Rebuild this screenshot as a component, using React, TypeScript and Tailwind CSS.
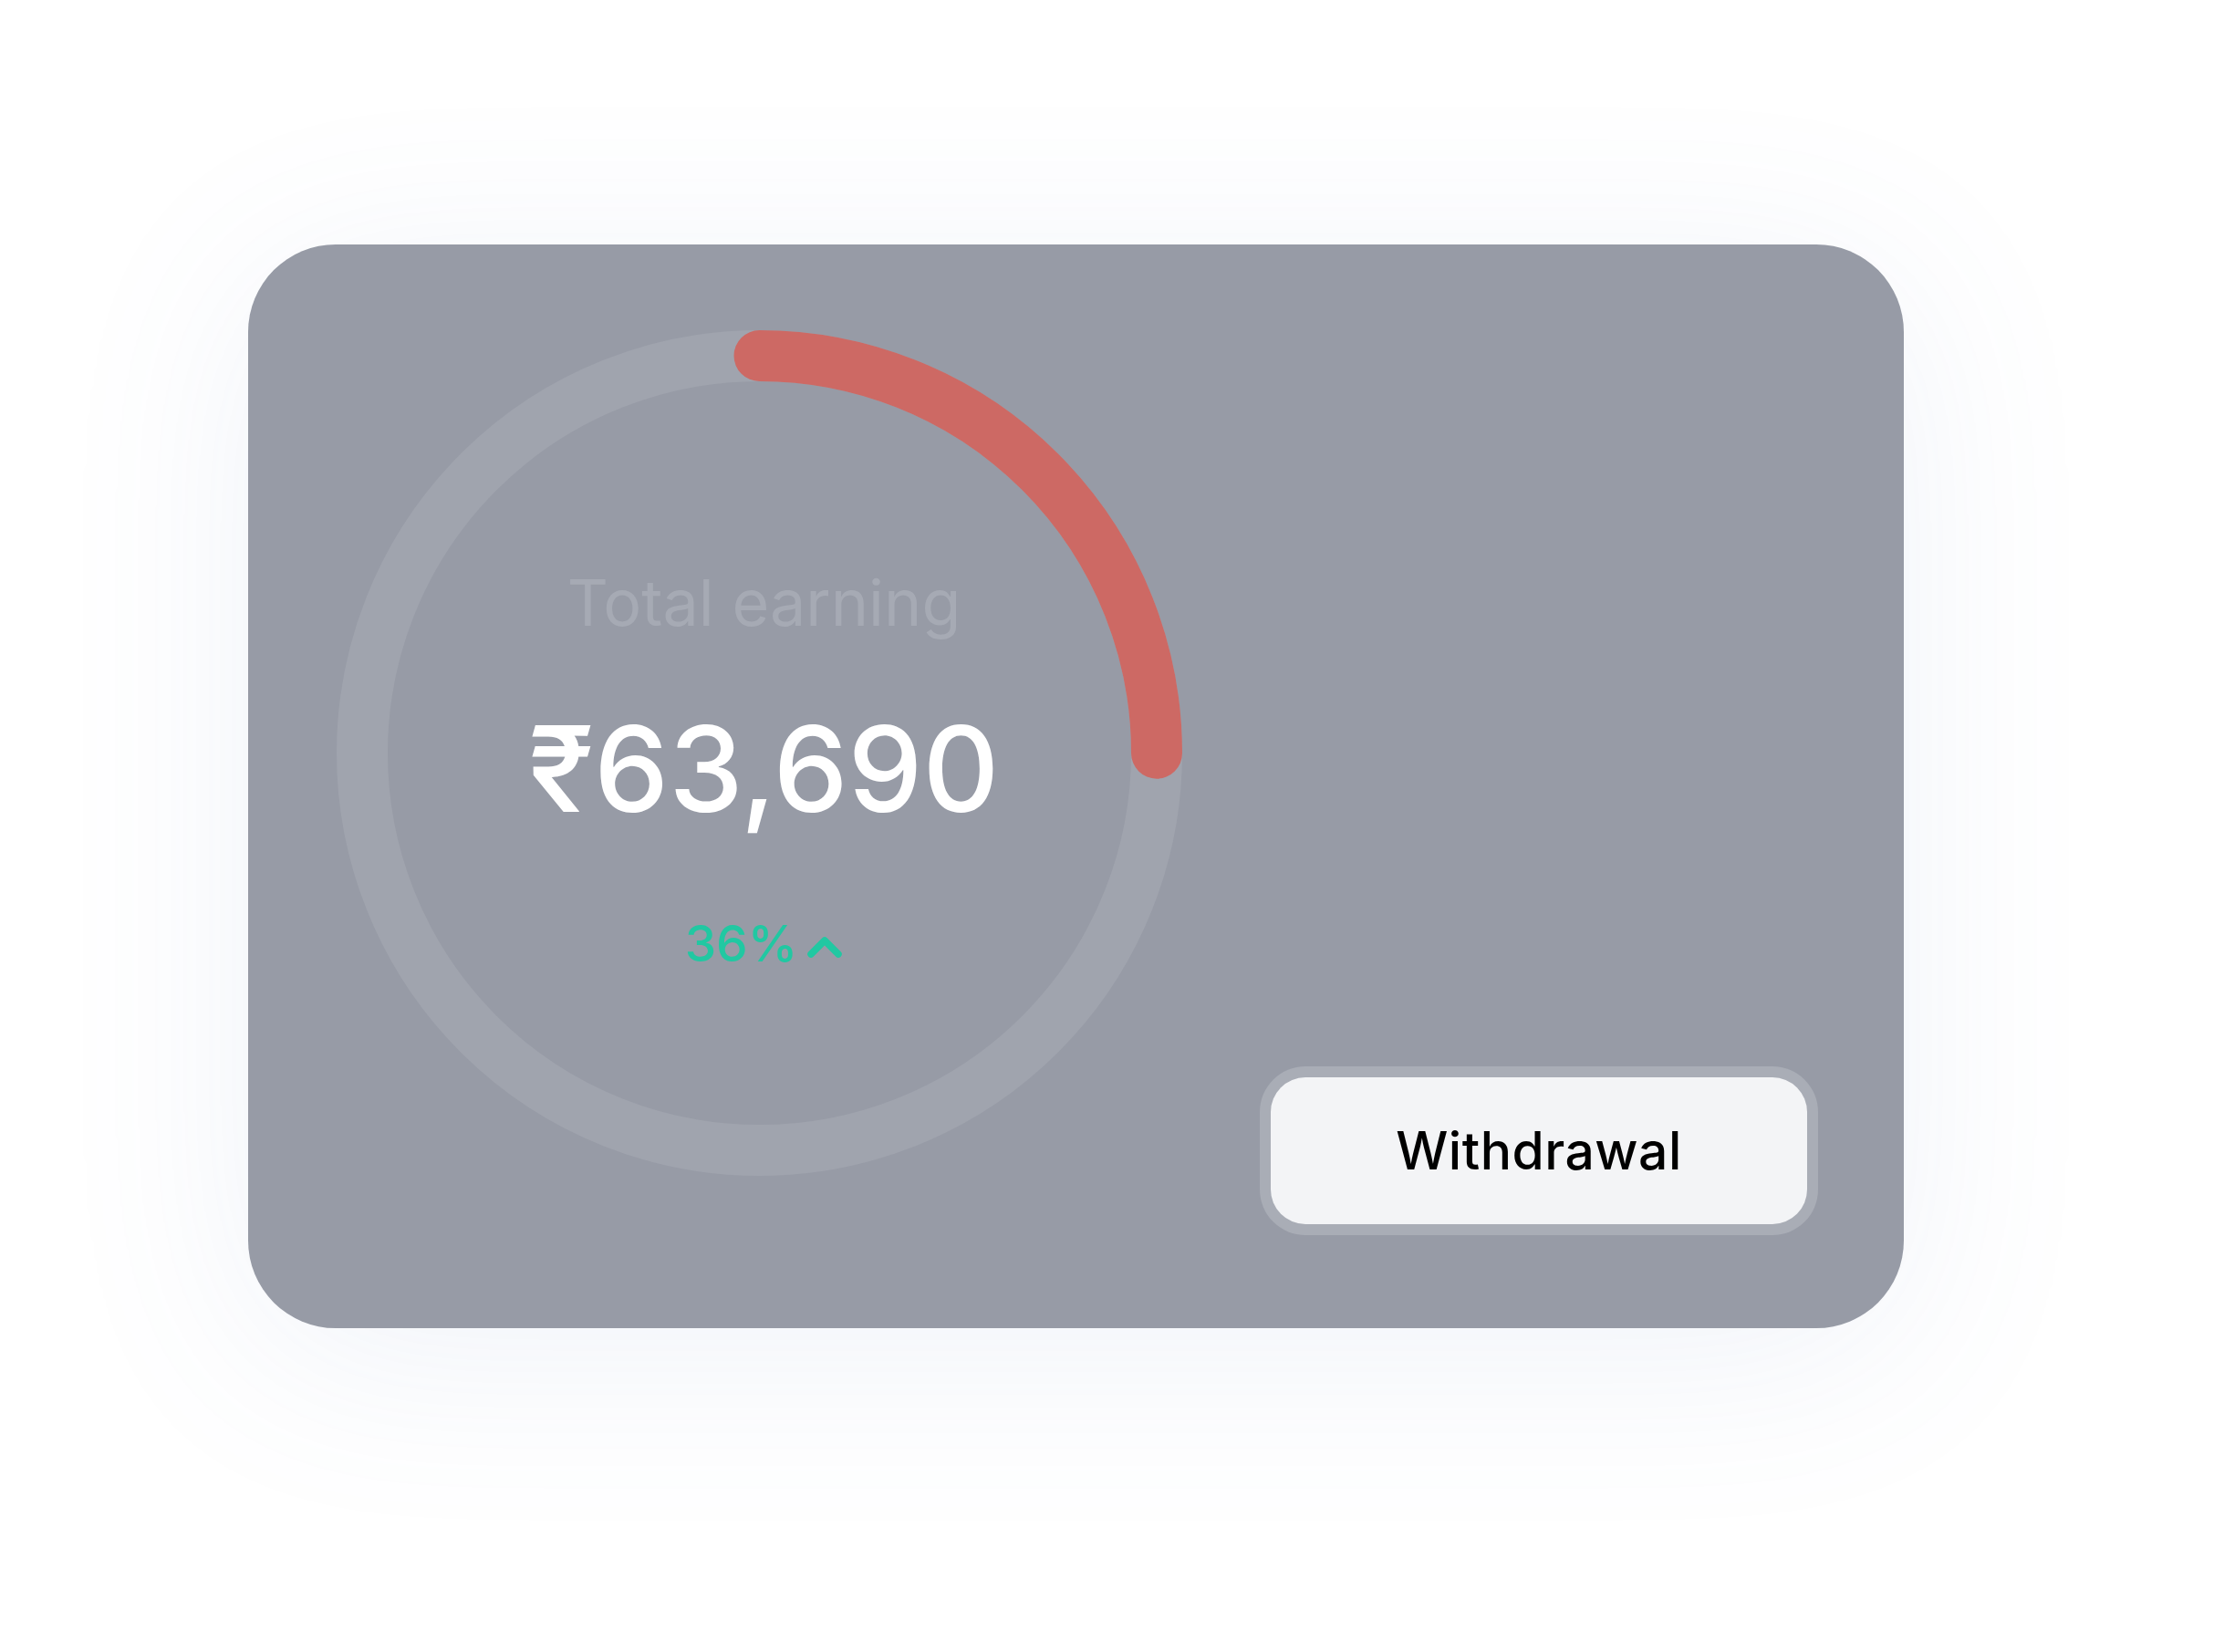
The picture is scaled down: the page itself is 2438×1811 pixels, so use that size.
import React from "react";

const R = 435.5;
const C = 2 * Math.PI * R;

function Ring() {
  return (
    <svg width="927" height="927" viewBox="0 0 927 927" className="col-start-1 row-start-1">
      <circle cx="463.5" cy="463.5" r={R} fill="none" stroke="#a0a4ae" strokeWidth="56" />
      <circle
        cx="463.5"
        cy="463.5"
        r={R}
        fill="none"
        stroke="#cd6964"
        strokeWidth="56"
        strokeLinecap="round"
        strokeDasharray={`${C * 0.25} ${C}`}
        transform="rotate(-90 463.5 463.5)"
      />
    </svg>
  );
}

export default function App() {
  return (
    <div
      className="min-h-[1811px] w-full bg-white pl-[272px] pt-[268px]"
      style={{ fontFamily: "Inter, 'Noto Sans', sans-serif" }}
    >
      <div className="flex h-[1188px] w-[1815px] justify-between rounded-[96px] bg-[#979ba6] pb-[102px] pl-[97px] pr-[94px] pt-[94px] shadow-[0_30px_220px_rgba(90,120,190,0.09)]">
        <div className="grid self-start">
          <Ring />
          <div className="col-start-1 row-start-1 flex flex-col items-center pl-[10px] pt-[264px]">
            <div className="text-[70px] leading-none text-[#a6aab4]">Total earning</div>
            <div className="mt-[82px] text-[130px] font-medium leading-none text-white">₹63,690</div>
            <div className="mt-[99px] flex items-center gap-[10px] text-[55px] font-medium leading-none text-[#21c8a2]">
              <span>36%</span>
              <svg width="40" height="28" viewBox="0 0 40 28" className="mt-[4px]">
                <path d="M5 23 L20 8 L35 23" fill="none" stroke="#21c8a2" strokeWidth="7.5" strokeLinecap="round" strokeLinejoin="round" />
              </svg>
            </div>
          </div>
        </div>
        <div className="self-end rounded-[50px] bg-[#a9adb6] p-[12px]">
          <button className="flex h-[161px] w-[588px] items-center justify-center rounded-[38px] bg-[#f3f4f6] text-[57px] font-medium tracking-[0.5px] text-black">
            Withdrawal
          </button>
        </div>
      </div>
    </div>
  );
}
